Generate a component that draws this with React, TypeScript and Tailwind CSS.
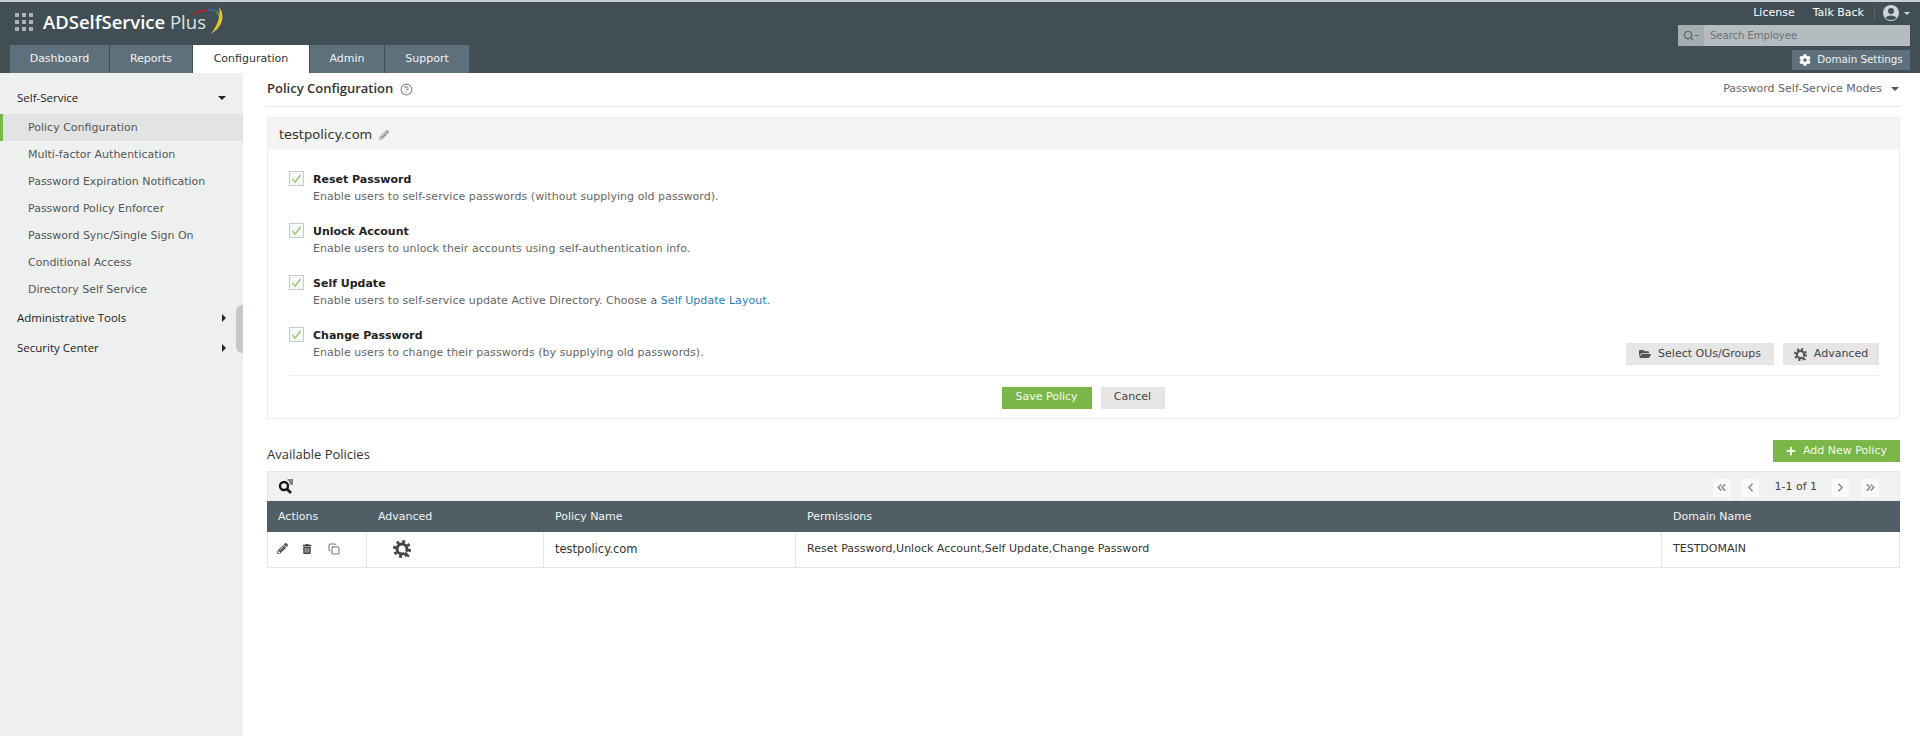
import { ChevronLeft, ChevronRight, ChevronsLeft, ChevronsRight, CircleHelp, Copy, Search } from "lucide-react";
import { FaCog, FaFolderOpen, FaPencilAlt, FaPlus, FaTrashAlt } from "react-icons/fa";

const tabs = [
  { name: "Dashboard", w: "w-[99px]" },
  { name: "Reports", w: "w-[82px]" },
  { name: "Configuration", w: "w-[116px]", active: true },
  { name: "Admin", w: "w-[74px]" },
  { name: "Support", w: "w-[84px]" },
];

const menu = [
  "Policy Configuration",
  "Multi-factor Authentication",
  "Password Expiration Notification",
  "Password Policy Enforcer",
  "Password Sync/Single Sign On",
  "Conditional Access",
  "Directory Self Service",
];

const verdana = "font-['DejaVu_Sans',sans-serif]";

function Caret({ right }: { right?: boolean }) {
  return right ? (
    <span className="w-0 h-0 border-y-[4px] border-y-transparent border-l-[4px] border-l-[#222]" />
  ) : (
    <span className="w-0 h-0 border-x-[4px] border-x-transparent border-t-[4px] border-t-[#222]" />
  );
}

function ToolGear({ size = 14, color = "#444", cut = "#fff" }: { size?: number; color?: string; cut?: string }) {
  return (
    <svg width={size} height={size} viewBox="0 0 18 18" fill="none">
      <circle cx="9" cy="9" r="7.6" stroke={color} strokeWidth="2.8" strokeDasharray="2.9 3.07" />
      <circle cx="9" cy="9" r="5" stroke={color} strokeWidth="3" />
      <path d="M9 9 L14 14" stroke={cut} strokeWidth="2" />
      <path d="M12 12.5 L16 16.5" stroke={color} strokeWidth="2" />
    </svg>
  );
}

function FilterSearch() {
  return (
    <svg width="16" height="15" viewBox="0 0 16 15" fill="none" stroke="#1a1a1a">
      <circle cx="6" cy="7" r="4" strokeWidth="2.4" />
      <path d="M9 10 L13 14" strokeWidth="2.6" />
      <path d="M9.5 1 H15 M11 3 H15 M12 5 H15" strokeWidth="1.1" />
    </svg>
  );
}

function Option({ title, children }: { title: string; children: React.ReactNode }) {
  return (
    <div className="flex h-[52px]">
      <div className="w-[15px] h-[15px] border border-[#c6cdc6] bg-[#f6f8f5] flex items-center justify-center shrink-0">
        <svg width="11" height="11" viewBox="0 0 12 12" fill="none" stroke="#86bd5a" strokeWidth="1.3">
          <path d="M1.5 6.5 L4.5 10 L10.5 2" />
        </svg>
      </div>
      <div className="ml-[9px]">
        <div className={`${verdana} text-[11px] leading-[17px] font-bold text-[#222]`}>{title}</div>
        <div className={`${verdana} text-[11px] tracking-[0.05px] leading-[17px] text-[#666]`}>{children}</div>
      </div>
    </div>
  );
}

function PageBtn({ children }: { children: React.ReactNode }) {
  return (
    <span className="w-[17px] h-[18px] bg-[#fafafa] flex items-center justify-center text-[#8a8a8a]">{children}</span>
  );
}

export default function App() {
  return (
    <div className="w-[1920px] h-[736px] flex flex-col bg-white overflow-hidden font-['Open_Sans',sans-serif]">
      <header className="h-[73px] shrink-0 bg-[#414e56] border-t-[2px] border-[#c9ced1] flex justify-between">
        <div className="flex flex-col justify-between pl-[10px]">
          <div className="flex items-center pl-[5px] pt-[7px]">
            <svg width="18" height="18" viewBox="0 0 18 18" fill="#aab2b6">
              <rect x="0" y="0" width="4" height="4" />
              <rect x="7" y="0" width="4" height="4" />
              <rect x="14" y="0" width="4" height="4" />
              <rect x="0" y="7" width="4" height="4" />
              <rect x="7" y="7" width="4" height="4" />
              <rect x="14" y="7" width="4" height="4" />
              <rect x="0" y="14" width="4" height="4" />
              <rect x="7" y="14" width="4" height="4" />
              <rect x="14" y="14" width="4" height="4" />
            </svg>
            <span className="relative ml-[10px] text-[18.5px] leading-[26px] font-semibold text-white">
              ADSelfService <span className="font-normal text-[#dfe3e5]">Plus</span>
              <svg width="36" height="30" viewBox="0 0 36 30" fill="none" className="absolute left-[146px] top-[-4px]">
                <path d="M4 10 C8 6 14 5 19 6" stroke="#b5252b" strokeWidth="1.8" />
                <path d="M19 5 C22 4 25 5 27 6" stroke="#2f6fb0" strokeWidth="1.6" />
                <path d="M27 6 C29 8 30 10 31 13" stroke="#4f9e3f" strokeWidth="1.6" />
                <path d="M30 2 C36 10 35 21 22 29 C28 21 32 12 30 2 Z" fill="#e8c52d" />
              </svg>
            </span>
          </div>
          <nav className="flex gap-[1px] h-[28px]">
            {tabs.map((t) => (
              <div
                key={t.name}
                className={`${t.w} flex items-center justify-center pt-[1px] ${verdana} text-[11px] ${t.active ? "bg-white text-[#333]" : "bg-[#5e707c] text-[#f0f3f4]"}`}
              >
                {t.name}
              </div>
            ))}
          </nav>
        </div>
        <div className="w-[234px] flex flex-col items-end pr-[10px]">
          <div className={`flex items-center h-[22px] ${verdana} text-[11px] text-white`}>
            <span>License</span>
            <span className="ml-[18px]">Talk Back</span>
            <span className="w-px h-[14px] bg-[#566570] ml-[10px]" />
            <svg width="18" height="18" viewBox="0 0 18 18" className="ml-[7px]">
              <circle cx="9" cy="9" r="8" fill="#cfd5d8" />
              <circle cx="9" cy="7" r="3" fill="#414e56" />
              <path d="M3.5 14 C5 10.5 13 10.5 14.5 14 C12 16.5 6 16.5 3.5 14 Z" fill="#414e56" />
            </svg>
            <span className="ml-[4px] w-0 h-0 border-x-[3px] border-x-transparent border-t-[3px] border-t-[#cfd5d8]" />
          </div>
          <div className="w-[232px] h-[21px] bg-[#b5bcbf] flex items-center mt-[1px]">
            <div className="w-[26px] h-full bg-[#a5adb1] flex items-center justify-center gap-[1px] text-[#5c666c]">
              <Search size={11} strokeWidth={3} />
              <span className="w-[4px] h-px bg-[#5c666c]" />
            </div>
            <span className={`ml-[6px] ${verdana} text-[10px] text-[#6a7276]`}>Search Employee</span>
          </div>
          <div className={`w-[118px] h-[20px] mt-[4px] bg-[#5e707c] flex items-center justify-center gap-[6px] ${verdana} text-[10.3px] text-[#f0f3f4]`}>
            <FaCog size={12} color="#fff" />
            Domain Settings
          </div>
        </div>
      </header>

      <div className="flex flex-1 min-h-0">
        <aside className="w-[243px] shrink-0 bg-[#eef0f0] relative pt-[11px]">
          <div className="h-[30px] pb-[2px] flex items-center justify-between px-[17px] text-[11.5px] text-[#222]">
            Self-Service
            <Caret />
          </div>
          {menu.map((m, i) => (
            <div
              key={m}
              className={`h-[27px] pt-[1px] flex items-center ${verdana} text-[11px] text-[#555] ${i === 0 ? "bg-[#e2e3e3] border-l-[3px] border-[#7ab648] pl-[25px]" : "pl-[28px]"}`}
            >
              {m}
            </div>
          ))}
          <div className="h-[30px] flex items-center justify-between px-[17px] text-[11.5px] text-[#222]">
            Administrative Tools
            <Caret right />
          </div>
          <div className="h-[30px] flex items-center justify-between px-[17px] text-[11.5px] text-[#222]">
            Security Center
            <Caret right />
          </div>
          <div className="absolute right-0 top-[232px] w-[7px] h-[48px] bg-[#c4c8c9] rounded-l-[6px]" />
        </aside>

        <main className="flex-1 pl-[24px] pr-[20px]">
          <div className="h-[34px] flex items-center justify-between border-b border-[#e6e6e6] pb-[1px]">
            <div className="flex items-center gap-[7px]">
              <span className="text-[13px] font-semibold text-[#333]">Policy Configuration</span>
              <CircleHelp size={13} color="#888" />
            </div>
            <div className="flex items-center gap-[9px] pr-[1px]">
              <span className={`${verdana} text-[11px] text-[#666]`}>Password Self-Service Modes</span>
              <span className="w-0 h-0 border-x-[4px] border-x-transparent border-t-[4px] border-t-[#555]" />
            </div>
          </div>

          <section className="mt-[10px] h-[302px] border border-[#eeeeee]">
            <div className="h-[32px] bg-[#f4f4f4] flex items-center pt-[1px] pl-[11px] gap-[7px]">
              <span className={`${verdana} text-[13px] text-[#333]`}>testpolicy.com</span>
              <FaPencilAlt size={10} color="#999" />
            </div>
            <div className="pl-[21px] pr-[20px] pt-[21px]">
              <Option title="Reset Password">Enable users to self-service passwords (without supplying old password).</Option>
              <Option title="Unlock Account">Enable users to unlock their accounts using self-authentication info.</Option>
              <Option title="Self Update">
                Enable users to self-service update Active Directory. Choose a <span className="text-[#1f7fb5]">Self Update Layout.</span>
              </Option>
              <div className="flex justify-between h-[48px]">
                <Option title="Change Password">Enable users to change their passwords (by supplying old passwords).</Option>
                <div className="flex gap-[9px] pt-[16px]">
                  <div className={`w-[148px] h-[22px] bg-[#e6e6e6] flex items-center justify-center gap-[7px] ${verdana} text-[11px] text-[#444]`}>
                    <FaFolderOpen size={12} color="#555" />
                    Select OUs/Groups
                  </div>
                  <div className={`w-[96px] h-[22px] bg-[#e6e6e6] flex items-center justify-center gap-[7px] ${verdana} text-[11px] text-[#444]`}>
                    <ToolGear size={13} color="#555" cut="#e6e6e6" />
                    Advanced
                  </div>
                </div>
              </div>
              <div className="border-t border-[#eeeeee] h-[41px] pt-[3px] pr-[2px] flex items-center justify-center gap-[9px]">
                <div className={`w-[90px] h-[22px] bg-[#7ab648] flex items-center justify-center ${verdana} text-[11px] text-[#f4fcec]`}>Save Policy</div>
                <div className={`w-[64px] h-[22px] bg-[#e6e6e6] flex items-center justify-center ${verdana} text-[11px] text-[#444]`}>Cancel</div>
              </div>
            </div>
          </section>

          <div className="mt-[21px] h-[31px] flex justify-between">
            <span className="text-[13px] leading-[28px] text-[#333]">Available Policies</span>
            <div className={`w-[127px] h-[22px] bg-[#7ab648] flex items-center justify-center gap-[7px] ${verdana} text-[11px] text-[#f4fcec]`}>
              <FaPlus size={10} />
              Add New Policy
            </div>
          </div>

          <div className="h-[30px] bg-[#f1f1f1] border border-[#e8e8e8] flex items-center justify-between pl-[10px] pr-[20px]">
            <FilterSearch />
            <div className={`flex items-center pt-[3px] ${verdana} text-[11px] text-[#444]`}>
              <PageBtn><ChevronsLeft size={13} strokeWidth={3} /></PageBtn>
              <span className="ml-[12px]"><PageBtn><ChevronLeft size={13} strokeWidth={3} /></PageBtn></span>
              <span className="mx-[15px]">1-1 of 1</span>
              <PageBtn><ChevronRight size={13} strokeWidth={3} /></PageBtn>
              <span className="ml-[13px]"><PageBtn><ChevronsRight size={13} strokeWidth={3} /></PageBtn></span>
            </div>
          </div>

          <div className={`grid grid-cols-[100px_177px_252px_866px_1fr] ${verdana} text-[11px]`}>
            <div className="h-[31px] pt-[1px] bg-[#525e66] text-[#f0f3f4] flex items-center pl-[11px]">Actions</div>
            <div className="h-[31px] pt-[1px] bg-[#525e66] text-[#f0f3f4] flex items-center pl-[11px]">Advanced</div>
            <div className="h-[31px] pt-[1px] bg-[#525e66] text-[#f0f3f4] flex items-center pl-[11px]">Policy Name</div>
            <div className="h-[31px] pt-[1px] bg-[#525e66] text-[#f0f3f4] flex items-center pl-[11px]">Permissions</div>
            <div className="h-[31px] pt-[1px] bg-[#525e66] text-[#f0f3f4] flex items-center pl-[11px]">Domain Name</div>

            <div className="h-[36px] pb-[2px] border-b border-l border-r border-[#e6e6e6] flex items-center pl-[9px] text-[#444]">
              <FaPencilAlt size={11} color="#555" />
              <span className="ml-[14px]"><FaTrashAlt size={10} color="#444" /></span>
              <span className="ml-[16px]"><Copy size={12} strokeWidth={1.5} /></span>
            </div>
            <div className="h-[36px] pb-[2px] border-b border-r border-[#e6e6e6] flex items-center pl-[26px]">
              <ToolGear size={18} color="#444" />
            </div>
            <div className="h-[36px] border-b border-r border-[#e6e6e6] flex items-center pl-[11px] text-[11.5px] text-[#333]">testpolicy.com</div>
            <div className="h-[36px] pb-[1px] border-b border-r border-[#e6e6e6] flex items-center pl-[11px] text-[#333]">Reset Password,Unlock Account,Self Update,Change Password</div>
            <div className="h-[36px] border-b border-r border-[#e6e6e6] flex items-center pl-[11px] text-[#333]">TESTDOMAIN</div>
          </div>
        </main>
      </div>
    </div>
  );
}
